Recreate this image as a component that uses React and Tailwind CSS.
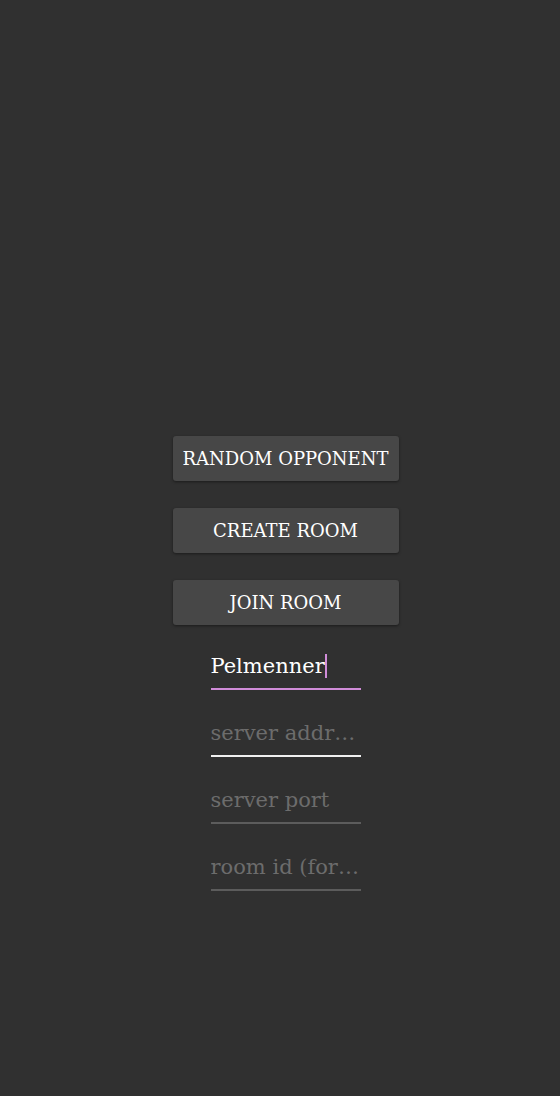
import { useState } from "react";

function MenuButton({ label }) {
  return (
    <button className="w-[226px] h-[45px] rounded-[3px] bg-[#474747] text-white text-[18px] font-['DejaVu_Serif','Liberation_Serif',serif] shadow-[0_1px_3px_rgba(0,0,0,0.45)] hover:bg-[#505050]">
      {label}
    </button>
  );
}

const inputBase =
  "w-[150px] h-[44px] bg-transparent outline-none text-[21px] text-white placeholder:text-[#6c6c6c] border-b-2 pb-[3px] text-ellipsis font-['DejaVu_Serif','Liberation_Serif',serif]";

export default function App() {
  const [name, setName] = useState("Pelmenner");
  const [address, setAddress] = useState("");
  const [port, setPort] = useState("");
  const [roomId, setRoomId] = useState("");

  return (
    <div className="min-h-screen w-full bg-[#303030] flex flex-col items-center pt-[436px] pl-[11px] font-['DejaVu_Serif','Liberation_Serif',serif]">
      <div className="flex flex-col gap-[27px]">
        <MenuButton label="RANDOM OPPONENT" />
        <MenuButton label="CREATE ROOM" />
        <MenuButton label="JOIN ROOM" />
      </div>

      <div className="flex flex-col gap-[23px] mt-[21px]">
        <div className="relative">
          <input
            value={name}
            onChange={(e) => setName(e.target.value)}
            className={inputBase + " border-[#d08cd8] caret-[#d08cd8]"}
          />
          <div className="pointer-events-none absolute left-0 top-0 h-[39px] flex items-center text-[21px] whitespace-pre">
            <span className="invisible">{name}</span>
            <span className="inline-block w-[2px] h-[24px] bg-[#d08cd8]" />
          </div>
        </div>
        <input
          value={address}
          onChange={(e) => setAddress(e.target.value)}
          placeholder="server address"
          className={inputBase + " border-[#f0f0f0]"}
        />
        <input
          value={port}
          onChange={(e) => setPort(e.target.value)}
          placeholder="server port"
          className={inputBase + " border-[#5c5c5c]"}
        />
        <input
          value={roomId}
          onChange={(e) => setRoomId(e.target.value)}
          placeholder="room id (for joining)"
          className={inputBase + " border-[#5c5c5c]"}
        />
      </div>
    </div>
  );
}
